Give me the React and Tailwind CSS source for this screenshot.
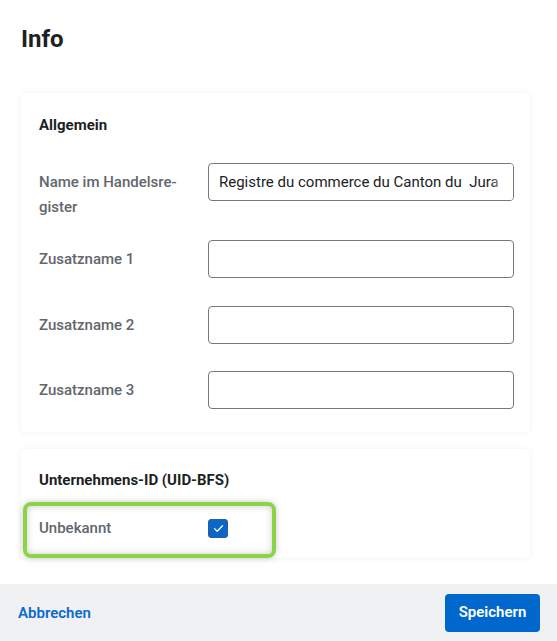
import React from "react";

function Field({ label, children, className = "" }) {
  return (
    <div className={"flex items-start " + className}>
      <div className="w-[169px] shrink-0 pt-[6.5px] pr-3 text-[15px] leading-[25px] font-medium text-[#62666d]">
        {label}
      </div>
      {children}
    </div>
  );
}

function Input({ value }) {
  return (
    <div className="relative w-[306px] h-[38px] border border-[#74787f] rounded-[4px] bg-white overflow-hidden">
      {value && (
        <>
          <div className="h-full flex items-center pl-[10px] text-[15px] text-[#202226] whitespace-pre">
            {value}
          </div>
          <div className="absolute right-[8px] top-0 h-full w-[14px] bg-gradient-to-r from-transparent to-white/80" />
          <div className="absolute right-0 top-0 h-full w-[8px] bg-white" />
        </>
      )}
    </div>
  );
}

export default function App() {
  return (
    <div className="w-[557px] h-[641px] flex flex-col bg-white font-['Roboto',sans-serif] overflow-hidden">
      <div className="flex-1 px-[21px] pt-[23px]">
        <h1 className="text-[24px] leading-[32px] font-bold text-[#1d1f23]">Info</h1>

        <div className="mt-[38px] w-[509px] bg-white rounded-[3px] shadow-[0_0_6px_rgba(0,0,0,0.06)] pl-[18px] pr-[16px] pt-[22px] pb-[23px]">
          <h2 className="text-[15px] leading-[20px] font-bold text-[#1d1f23]">Allgemein</h2>
          <Field label={<>Name im Handelsre-<br />gister</>} className="mt-[28px]">
            <Input value="Registre du commerce du Canton du  Jura" />
          </Field>
          <Field label="Zusatzname 1" className="mt-[20.5px]">
            <Input />
          </Field>
          <Field label="Zusatzname 2" className="mt-[28px]">
            <Input />
          </Field>
          <Field label="Zusatzname 3" className="mt-[27px]">
            <Input />
          </Field>
        </div>

        <div className="mt-[17px] w-[509px] bg-white rounded-[3px] shadow-[0_0_6px_rgba(0,0,0,0.06)] pl-[18px] pr-[16px] pt-[21px] pb-[20px]">
          <h2 className="text-[15px] leading-[20px] font-bold text-[#1d1f23]">Unternehmens-ID (UID-BFS)</h2>
          <div className="relative mt-[28px] h-[20px] flex items-center">
            <div className="w-[169px] text-[15px] leading-[20px] font-medium text-[#62666d]">Unbekannt</div>
            <div className="w-[20px] h-[19px] rounded-[3px] bg-[#0a67c9] border border-[#2d5d93] flex items-center justify-center">
              <svg width="11" height="9" viewBox="0 0 11 9" fill="none">
                <path d="M1.5 4.6 L4.2 7.2 L9.5 1.8" stroke="white" strokeWidth="1.3" strokeLinecap="round" strokeLinejoin="round" />
              </svg>
            </div>
            <div className="absolute left-[-16px] top-[-16px] w-[253px] h-[56px] border-[4px] border-[#8cd447] rounded-[8px] shadow-[0_0_6px_rgba(0,0,0,0.22),inset_0_0_7px_rgba(0,0,0,0.2)] pointer-events-none" />
          </div>
        </div>
      </div>

      <footer className="h-[57px] shrink-0 bg-[#f0f1f3] flex items-center justify-between pl-[18px] pr-[17px]">
        <button className="text-[15px] font-semibold text-[#0a6ad0] pt-[2px]">Abbrechen</button>
        <button className="w-[95px] h-[38px] rounded-[4px] bg-[#0068cc] text-white text-[15px] font-semibold">
          Speichern
        </button>
      </footer>
    </div>
  );
}
